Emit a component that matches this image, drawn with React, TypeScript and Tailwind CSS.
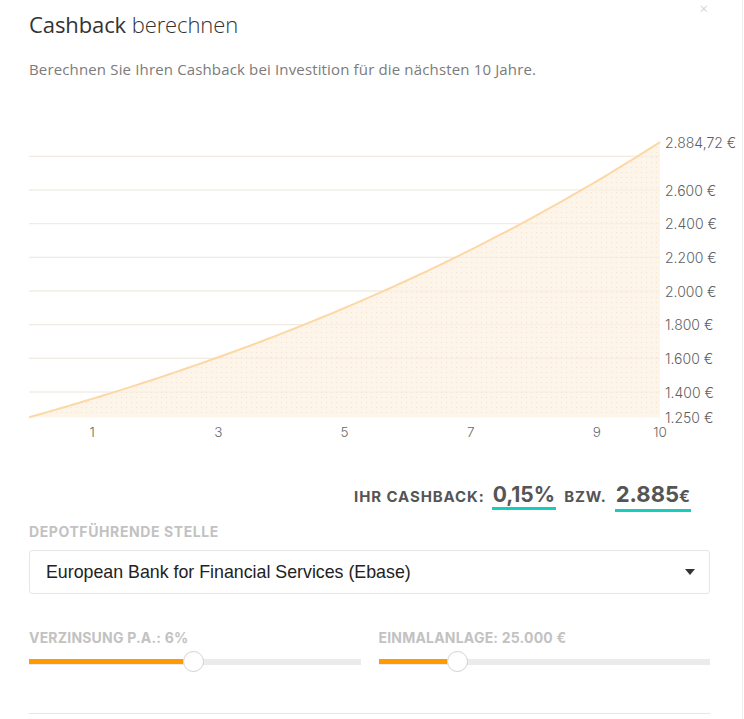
import React from "react";

const X0 = 0;
const XW = 631;
const yOf = (v: number) => 417.25 - (v - 1250) * 0.168333 - 130;
const xOf = (t: number) => X0 + (t / 10) * XW;

function buildCurve() {
  const pts: string[] = [];
  const r = Math.pow(2884.72 / 1250, 0.1);
  for (let i = 0; i <= 100; i++) {
    const t = i / 10;
    const v = 1250 * Math.pow(r, t);
    pts.push(`${xOf(t).toFixed(2)},${yOf(v).toFixed(2)}`);
  }
  return pts;
}

function Chart() {
  const pts = buildCurve();
  const line = "M" + pts.join(" L");
  const area = line + ` L${xOf(10)},${yOf(1250)} L${xOf(0)},${yOf(1250)} Z`;
  const grid = [1400, 1600, 1800, 2000, 2200, 2400, 2600, 2800];
  const labels: [number, string][] = [
    [2884.72, "2.884,72 €"],
    [2600, "2.600 €"],
    [2400, "2.400 €"],
    [2200, "2.200 €"],
    [2000, "2.000 €"],
    [1800, "1.800 €"],
    [1600, "1.600 €"],
    [1400, "1.400 €"],
    [1250, "1.250 €"],
  ];
  const xs = [1, 3, 5, 7, 9, 10];
  return (
    <svg width={715} height={312} className="block" style={{ fontFamily: "Inter, 'Noto Sans', sans-serif" }}>
      <defs>
        <pattern id="dots" width="5" height="5" patternUnits="userSpaceOnUse">
          <rect width="5" height="5" fill="#fef5ea" />
          <circle cx="2.5" cy="2.5" r="0.6" fill="#f8dfc2" />
        </pattern>
      </defs>
      {grid.map((g) => (
        <line key={g} x1={0} x2={631} y1={yOf(g)} y2={yOf(g)} stroke="#ededed" strokeWidth={1} />
      ))}
      <path d={area} fill="url(#dots)" />
      {grid.map((g) => (
        <line key={"o" + g} x1={0} x2={631} y1={yOf(g)} y2={yOf(g)} stroke="#f3e6d6" strokeOpacity={0.5} strokeWidth={1} />
      ))}
      <path d={line} fill="none" stroke="#fdd7a4" strokeWidth={2} />
      {labels.map(([v, s]) => (
        <text key={s} x={636} y={yOf(v)} dominantBaseline="central" fontSize={14} fill="#5f5f5f" fontWeight={300}>
          {s}
        </text>
      ))}
      {xs.map((t) => (
        <text key={t} x={xOf(t)} y={302} textAnchor="middle" dominantBaseline="central" fontSize={13.5} fill="#6a6a6a" fontWeight={300}>
          {t}
        </text>
      ))}
    </svg>
  );
}

function Slider({ label, pct }: { label: string; pct: number }) {
  return (
    <div className="flex-1">
      <div className="text-[14px] font-bold text-[#c2c2c2] leading-[16px] tracking-[0.2px]" style={{ fontFamily: "Inter, sans-serif" }}>
        {label}
      </div>
      <div className="relative mt-[13px] h-[6px] bg-[#ebebeb]">
        <div className="h-[5px] bg-[#ff9a00]" style={{ width: `calc(${pct}% - 11px)` }} />
        <div
          className="absolute top-[-8px] h-[21px] w-[21px] rounded-full bg-white border border-[#d2d2d2]"
          style={{ left: `calc(${pct}% - 11px)` }}
        />
      </div>
    </div>
  );
}

export default function App() {
  return (
    <div className="relative w-[744px] h-[719px] overflow-hidden bg-white flex" style={{ fontFamily: "'Open Sans', sans-serif" }}>
      <div className="w-[743px] pl-[29px] pr-[32px] border-r border-[#ededed]">
        <div className="pt-[9px] text-[22px] leading-[30px] text-[#333] tracking-[-0.1px]">
          <span className="font-normal">Cashback</span> <span className="font-light">berechnen</span>
        </div>
        <div className="mt-[20px] text-[15px] leading-[20px] text-[#7b7b7b] tracking-[0.15px]">
          Berechnen Sie Ihren Cashback bei Investition für die nächsten 10 Jahre.
        </div>
        <div className="mt-[51px]">
          <Chart />
        </div>
        <div className="mt-[40px] flex justify-end items-baseline pr-[19px] text-[#555]" style={{ fontFamily: "Inter, sans-serif" }}>
          <span className="text-[15px] font-bold tracking-[0.9px]">IHR CASHBACK:</span>
          <span className="ml-[7px] text-[21px] font-bold border-b-[3px] border-[#19cdbc] leading-[25px] px-[1px]">0,15%</span>
          <span className="ml-[8px] text-[15px] font-bold tracking-[0.9px]">BZW.</span>
          <span className="ml-[8px] text-[22px] font-bold border-b-[3px] border-[#19cdbc] leading-[25px] px-[1px]">
            2.885<span className="text-[16px]">€</span>
          </span>
        </div>
        <div className="mt-[12px] text-[14px] font-bold text-[#c2c2c2] leading-[16px] tracking-[0.6px]" style={{ fontFamily: "Inter, sans-serif" }}>
          DEPOTFÜHRENDE STELLE
        </div>
        <div
          className="mt-[10px] h-[44px] border border-[#e6e6e6] rounded-[3px] flex items-center justify-between pl-[16px] pr-[14px]"
          style={{ fontFamily: "'Liberation Sans', Arial, sans-serif" }}
        >
          <span className="text-[17.8px] text-[#222]">European Bank for Financial Services (Ebase)</span>
          <svg width="10" height="6" viewBox="0 0 10 6">
            <path d="M0 0 L10 0 L5 6 Z" fill="#333" />
          </svg>
        </div>
        <div className="mt-[36px] flex gap-[18px]">
          <Slider label="VERZINSUNG P.A.: 6%" pct={49.7} />
          <Slider label="EINMALANLAGE: 25.000 €" pct={24.1} />
        </div>
        <div className="mt-[48px] h-px bg-[#e6e6e6]" />
      </div>
      <div className="absolute top-0 right-[36px] text-[15px] leading-[16px] text-[#c8c8c8] font-light">×</div>
    </div>
  );
}
